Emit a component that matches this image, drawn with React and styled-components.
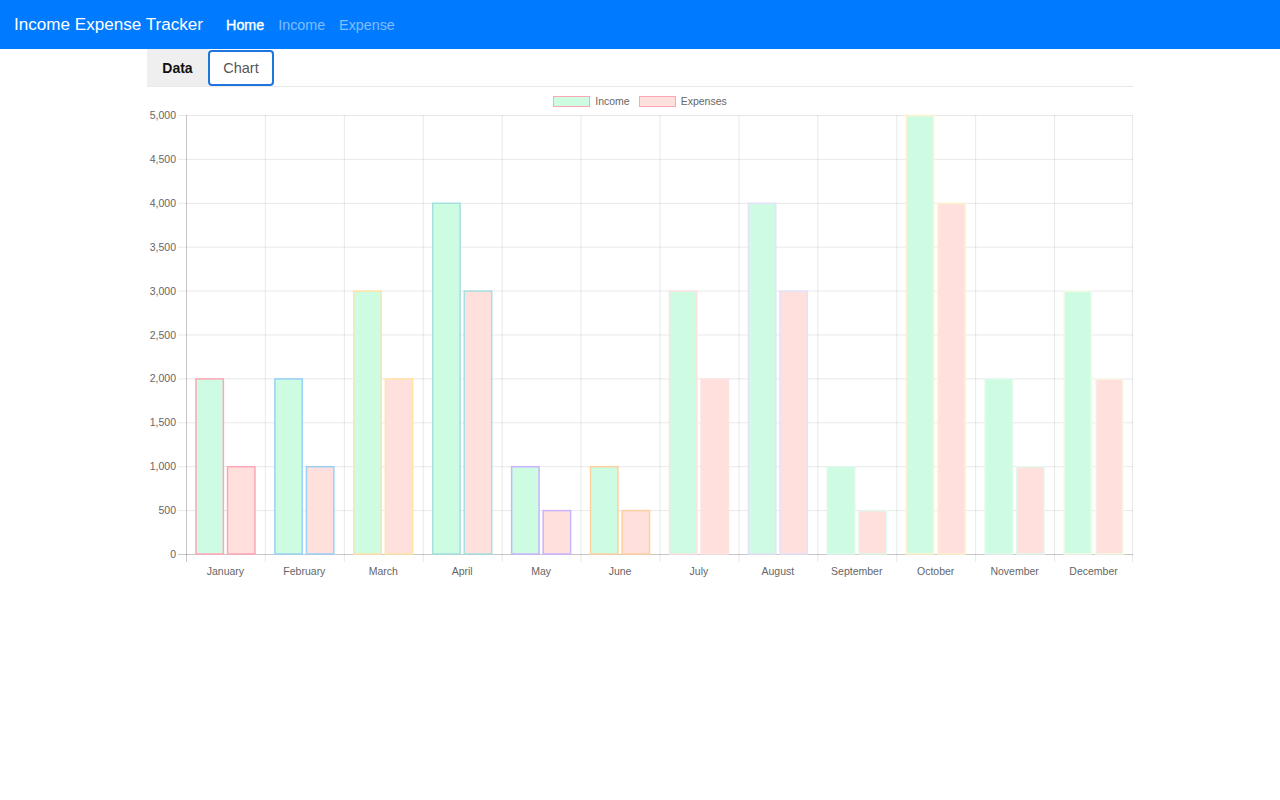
import React, { useState } from "react"
import styled, { createGlobalStyle } from "styled-components"

const GlobalStyle = createGlobalStyle`
  body {
    margin: 0;
    background: #fff;
    font-family: "Liberation Sans", Arial, sans-serif;
  }
`

const Navbar = styled.nav`
  height: 49px;
  background: #007bff;
  display: flex;
  align-items: center;
  padding: 0 14px;
`
const Brand = styled.span`
  color: #fff;
  font-size: 17.1px;
  margin-right: 16px;
  white-space: nowrap;
`
const NavLink = styled.a`
  color: ${(p) => (p.active ? "#fff" : "rgba(255,255,255,0.5)")};
  font-size: 14.3px;
  -webkit-text-stroke: ${(p) => (p.active ? "0.35px #fff" : "0")};
  padding: 0 7px;
  text-decoration: none;
  cursor: pointer;
`

const Container = styled.div`
  width: 986px;
  margin: 0 auto;
`
const Tabs = styled.div`
  display: flex;
  align-items: stretch;
  height: 37px;
  border-bottom: 1px solid #e9e9e9;
`
const Tab = styled.button`
  font-family: "Liberation Sans", Arial, sans-serif;
  font-size: ${(p) => (p.selected ? "14.5px" : "14px")};
  background: ${(p) => (p.selected ? "#fff" : "#efefef")};
  color: ${(p) => (p.selected ? "#555" : "#111")};
  font-weight: ${(p) => (p.selected ? 400 : 700)};
  border: ${(p) => (p.selected ? "2px solid #1f74e0" : "none")};
  border-radius: ${(p) => (p.selected ? "4px" : "0")};
  width: ${(p) => (p.selected ? "66px" : "61px")};
  margin-top: ${(p) => (p.selected ? "1px" : "0")};
  padding: 0;
  cursor: pointer;
`

const ChartWrap = styled.div`
  display: flex;
  flex-direction: column;
  align-items: center;
  padding-top: 8px;
`
const Legend = styled.div`
  display: flex;
  gap: 9px;
  height: 12px;
  align-items: center;
`
const LegendItem = styled.div`
  display: flex;
  align-items: center;
  gap: 5px;
  font-size: 10.5px;
  color: #666;
`
const Swatch = styled.span`
  width: 35px;
  height: 9px;
  background: ${(p) => p.fill};
  border: 1.5px solid #ffa5b8;
`

const months = ["January", "February", "March", "April", "May", "June", "July", "August", "September", "October", "November", "December"]
const income = [2000, 2000, 3000, 4000, 1000, 1000, 3000, 4000, 1000, 5000, 2000, 3000]
const expenses = [1000, 1000, 2000, 3000, 500, 500, 2000, 3000, 500, 4000, 1000, 2000]
const borders = ["#ffa5b8", "#9ad0f5", "#ffe4a6", "#a5dfdf", "#c9b3ff", "#ffcf9f", "#fde2e2", "#e4e2fb", "#e0f7ec", "#fff3cf", "#e3f9ee", "#f6fbe6"]

const INCOME_FILL = "#cdfce3"
const EXPENSE_FILL = "#ffe0dc"

// chart box, coordinates inside the svg
const LEFT = 39
const RIGHT = 986
const TOP = 8
const BOTTOM = 447
const MAX = 5000

function BarChart() {
  const cat = (RIGHT - LEFT) / 12
  const y = (v) => BOTTOM - (v / MAX) * (BOTTOM - TOP)
  const ticks = []
  for (let v = 0; v <= MAX; v += 500) ticks.push(v)

  return (
    <svg width="986" height="480" style={{ display: "block" }}>
      {ticks.map((v) => (
        <g key={v}>
          <line x1={LEFT - 8} x2={RIGHT} y1={y(v) + 0.5} y2={y(v) + 0.5} stroke={v === 0 ? "rgba(0,0,0,0.22)" : "rgba(0,0,0,0.09)"} />
          <text x={LEFT - 10} y={y(v) + 4} fontSize="10.5" fill="#666" textAnchor="end" fontFamily="Liberation Sans, Arial, sans-serif">
            {v.toLocaleString("en-US")}
          </text>
        </g>
      ))}
      {months.map((m, i) => (
        <line key={m} x1={LEFT + i * cat + 0.5} x2={LEFT + i * cat + 0.5} y1={TOP} y2={BOTTOM + 8} stroke={i === 0 ? "rgba(0,0,0,0.22)" : "rgba(0,0,0,0.09)"} />
      ))}
      <line x1={RIGHT - 0.5} x2={RIGHT - 0.5} y1={TOP} y2={BOTTOM + 8} stroke="rgba(0,0,0,0.09)" />
      {months.map((m, i) => {
        const start = LEFT + i * cat + cat * 0.1
        const slot = (cat * 0.8) / 2
        const w = slot * 0.9
        const pad = (slot - w) / 2
        return (
          <g key={m}>
            <rect x={start + pad + 0.5} y={y(income[i]) + 0.5} width={w - 1} height={BOTTOM - y(income[i]) - 0.5} fill={INCOME_FILL} stroke={borders[i]} strokeWidth="1.5" />
            <rect x={start + slot + pad + 0.5} y={y(expenses[i]) + 0.5} width={w - 1} height={BOTTOM - y(expenses[i]) - 0.5} fill={EXPENSE_FILL} stroke={borders[i]} strokeWidth="1.5" />
            <text x={LEFT + i * cat + cat / 2} y={BOTTOM + 21} fontSize="10.5" fill="#666" textAnchor="middle" fontFamily="Liberation Sans, Arial, sans-serif">
              {m}
            </text>
          </g>
        )
      })}
    </svg>
  )
}

export default function App() {
  const [tab, setTab] = useState("chart")

  return (
    <>
      <GlobalStyle />
      <Navbar>
        <Brand>Income Expense Tracker</Brand>
        <NavLink active>Home</NavLink>
        <NavLink>Income</NavLink>
        <NavLink>Expense</NavLink>
      </Navbar>
      <Container>
        <Tabs>
          <Tab selected={tab === "data"} onClick={() => setTab("data")}>Data</Tab>
          <Tab selected={tab === "chart"} onClick={() => setTab("chart")}>Chart</Tab>
        </Tabs>
        <ChartWrap>
          <Legend>
            <LegendItem><Swatch fill={INCOME_FILL} />Income</LegendItem>
            <LegendItem><Swatch fill={EXPENSE_FILL} />Expenses</LegendItem>
          </Legend>
          <BarChart />
        </ChartWrap>
      </Container>
    </>
  )
}
